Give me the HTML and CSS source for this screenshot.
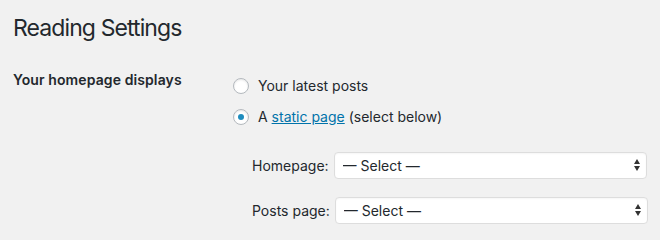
FILE: index.html
```html
<!DOCTYPE html>
<html lang="en">
<head>
  <meta charset="UTF-8" />
  <title>Reading Settings</title>
  <link rel="stylesheet" href="styles.css">
</head>
<body>

  <div class="wrap">
    <h1>Reading Settings</h1>

    <div class="form-row">
      <div class="row-label">Your homepage displays</div>
      <div class="row-field">
        <label class="radio-line">
          <input type="radio" name="show_on_front" value="posts" />
          <span class="radio-text">Your latest posts</span>
        </label>
        <label class="radio-line">
          <input type="radio" name="show_on_front" value="page" checked />
          <span class="radio-text">A <a href="#">static page</a> (select below)</span>
        </label>

        <ul class="page-options">
          <li>
            <label for="page_on_front">Homepage:</label>
            <span class="select-box">
              <select id="page_on_front">
                <option>— Select —</option>
              </select>
            </span>
          </li>
          <li>
            <label for="page_for_posts">Posts page:</label>
            <span class="select-box">
              <select id="page_for_posts">
                <option>— Select —</option>
              </select>
            </span>
          </li>
        </ul>
      </div>
    </div>
  </div>

</body>
</html>
```

FILE: styles.css
```css
body {
  margin: 0;
  background: #f1f1f1;
  color: #23282d;
  font-family: Inter, "Liberation Sans", sans-serif;
  font-size: 14px;
}
.wrap {
  padding: 0 13px;
}
h1 {
  margin: 0;
  padding: 14px 0 0;
  font-size: 23px;
  font-weight: 400;
  line-height: 29px;
  letter-spacing: -0.9px;
}
.form-row {
  display: flex;
  margin-top: 31px;
}
.row-label {
  width: 220px;
  flex: none;
  margin-top: -4px;
  font-weight: 600;
  line-height: 20px;
  letter-spacing: 0.1px;
}
.row-field {
  flex: 1;
}
.radio-line {
  display: flex;
  align-items: center;
  height: 31px;
  margin-top: -4px;
}
.radio-line + .radio-line {
  margin-top: 0;
}
.radio-line input {
  appearance: none;
  width: 16px;
  height: 16px;
  margin: 0 9px 0 0;
  border: 1px solid #b4b9be;
  border-radius: 50%;
  background: #fff;
  box-shadow: inset 0 1px 2px rgba(0, 0, 0, 0.1);
  display: grid;
  place-items: center;
}
.radio-line input:checked::before {
  content: "";
  width: 6px;
  height: 6px;
  border-radius: 50%;
  background: #1e8cbe;
}
a {
  color: #0073aa;
}
.page-options {
  list-style: none;
  margin: 20px 0 0;
  padding: 0 0 0 19px;
}
.page-options li {
  display: flex;
  align-items: center;
  height: 27px;
  margin-bottom: 18px;
}
.page-options label {
  flex: none;
  white-space: nowrap;
  margin-right: 5px;
}
.select-box {
  position: relative;
  display: block;
  flex: none;
}
.select-box select {
  appearance: none;
  display: block;
  width: 313px;
  height: 27px;
  padding: 0 8px;
  border: 1px solid #ddd;
  border-radius: 4px;
  background: #fff;
  color: #23282d;
  font-family: inherit;
  font-size: 14px;
  box-shadow: inset 0 1px 2px rgba(0, 0, 0, 0.04);
}
.select-box::before,
.select-box::after {
  content: "";
  position: absolute;
  right: 7px;
  border-left: 3.5px solid transparent;
  border-right: 3.5px solid transparent;
  pointer-events: none;
}
.select-box::before {
  top: 7px;
  border-bottom: 5px solid #333;
}
.select-box::after {
  top: 14px;
  border-top: 5px solid #333;
}
```
